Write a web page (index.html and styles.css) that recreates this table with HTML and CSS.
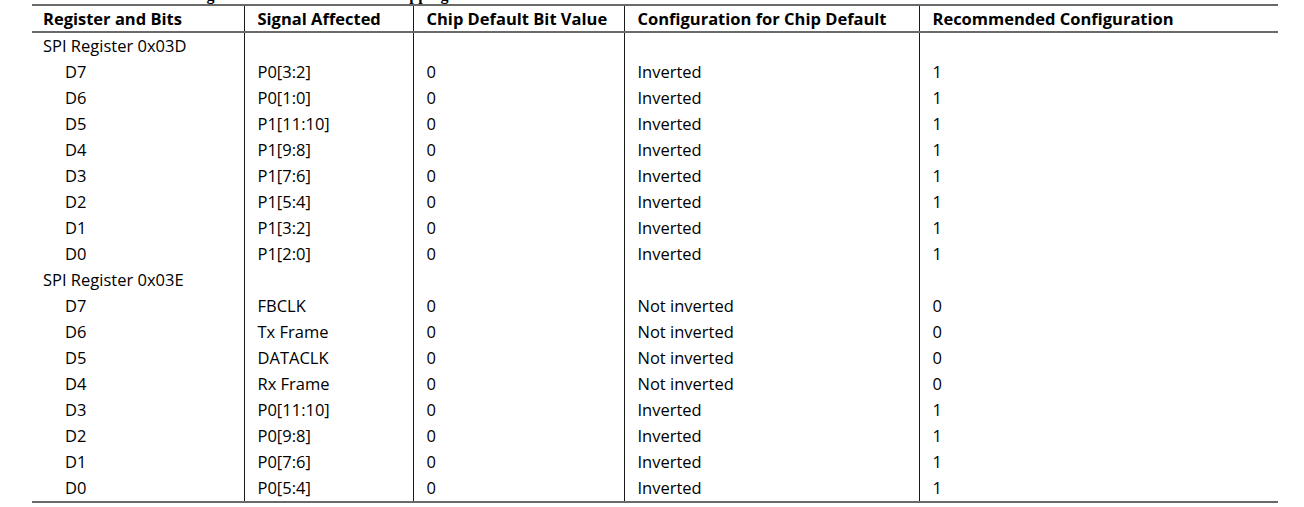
FILE: index.html
```html
<!DOCTYPE html>
<html lang="en">
<head>
<meta charset="utf-8">
<title>Register Settings</title>
<link rel="stylesheet" href="styles.css">
</head>
<body>
<div class="page">
  <div class="caption"><div class="caption-text">Table 48. Inversion Settings for Data Interface Port Mapping</div></div>
  <table class="reg">
    <colgroup>
      <col class="c1"><col class="c2"><col class="c3"><col class="c4"><col class="c5">
    </colgroup>
    <thead>
      <tr><th>Register and Bits</th><th>Signal Affected</th><th>Chip Default Bit Value</th><th>Configuration for Chip Default</th><th>Recommended Configuration</th></tr>
    </thead>
    <tbody>
      <tr><td>SPI Register 0x03D</td><td></td><td></td><td></td><td></td></tr>
      <tr><td class="bit">D7</td><td>P0[3:2]</td><td>0</td><td>Inverted</td><td>1</td></tr>
      <tr><td class="bit">D6</td><td>P0[1:0]</td><td>0</td><td>Inverted</td><td>1</td></tr>
      <tr><td class="bit">D5</td><td>P1[11:10]</td><td>0</td><td>Inverted</td><td>1</td></tr>
      <tr><td class="bit">D4</td><td>P1[9:8]</td><td>0</td><td>Inverted</td><td>1</td></tr>
      <tr><td class="bit">D3</td><td>P1[7:6]</td><td>0</td><td>Inverted</td><td>1</td></tr>
      <tr><td class="bit">D2</td><td>P1[5:4]</td><td>0</td><td>Inverted</td><td>1</td></tr>
      <tr><td class="bit">D1</td><td>P1[3:2]</td><td>0</td><td>Inverted</td><td>1</td></tr>
      <tr><td class="bit">D0</td><td>P1[2:0]</td><td>0</td><td>Inverted</td><td>1</td></tr>
      <tr><td>SPI Register 0x03E</td><td></td><td></td><td></td><td></td></tr>
      <tr><td class="bit">D7</td><td>FBCLK</td><td>0</td><td>Not inverted</td><td>0</td></tr>
      <tr><td class="bit">D6</td><td>Tx Frame</td><td>0</td><td>Not inverted</td><td>0</td></tr>
      <tr><td class="bit">D5</td><td>DATACLK</td><td>0</td><td>Not inverted</td><td>0</td></tr>
      <tr><td class="bit">D4</td><td>Rx Frame</td><td>0</td><td>Not inverted</td><td>0</td></tr>
      <tr><td class="bit">D3</td><td>P0[11:10]</td><td>0</td><td>Inverted</td><td>1</td></tr>
      <tr><td class="bit">D2</td><td>P0[9:8]</td><td>0</td><td>Inverted</td><td>1</td></tr>
      <tr><td class="bit">D1</td><td>P0[7:6]</td><td>0</td><td>Inverted</td><td>1</td></tr>
      <tr><td class="bit">D0</td><td>P0[5:4]</td><td>0</td><td>Inverted</td><td>1</td></tr>
    </tbody>
  </table>
</div>
</body>
</html>
```
FILE: styles.css
```css
html, body {
  margin: 0;
  padding: 0;
  background: #ffffff;
}

.page {
  padding-left: 32px;
  color: #000000;
}

.caption {
  width: 1246px;
  height: 4px;
  overflow: hidden;
}

.caption-text {
  margin-top: -13px;
  font-family: "Liberation Serif", "Times New Roman", serif;
  font-weight: bold;
  font-size: 16px;
  line-height: 16px;
  white-space: nowrap;
}

.reg {
  width: 1246px;
  border-collapse: collapse;
  table-layout: fixed;
  font-family: "Open Sans", "Liberation Sans", sans-serif;
  font-size: 16.5px;
  border-top: 2px solid #6a6a6a;
  border-bottom: 2px solid #6a6a6a;
}

.c1 { width: 212px; }
.c2 { width: 169px; }
.c3 { width: 211px; }
.c4 { width: 295px; }
.c5 { width: 359px; }

.reg th,
.reg td {
  padding: 0 0 0 13px;
  text-align: left;
  vertical-align: middle;
  white-space: nowrap;
  line-height: 20px;
  border-left: 1px solid #1a1a1a;
}

.reg th:first-child,
.reg td:first-child {
  border-left: none;
  padding-left: 11px;
}

.reg th {
  height: 25px;
  font-weight: 700;
  font-size: 16.5px;
  border-bottom: 2px solid #6a6a6a;
}

.reg td {
  height: 26px;
  font-weight: 400;
}

.reg td.bit {
  padding-left: 33px;
}
```
